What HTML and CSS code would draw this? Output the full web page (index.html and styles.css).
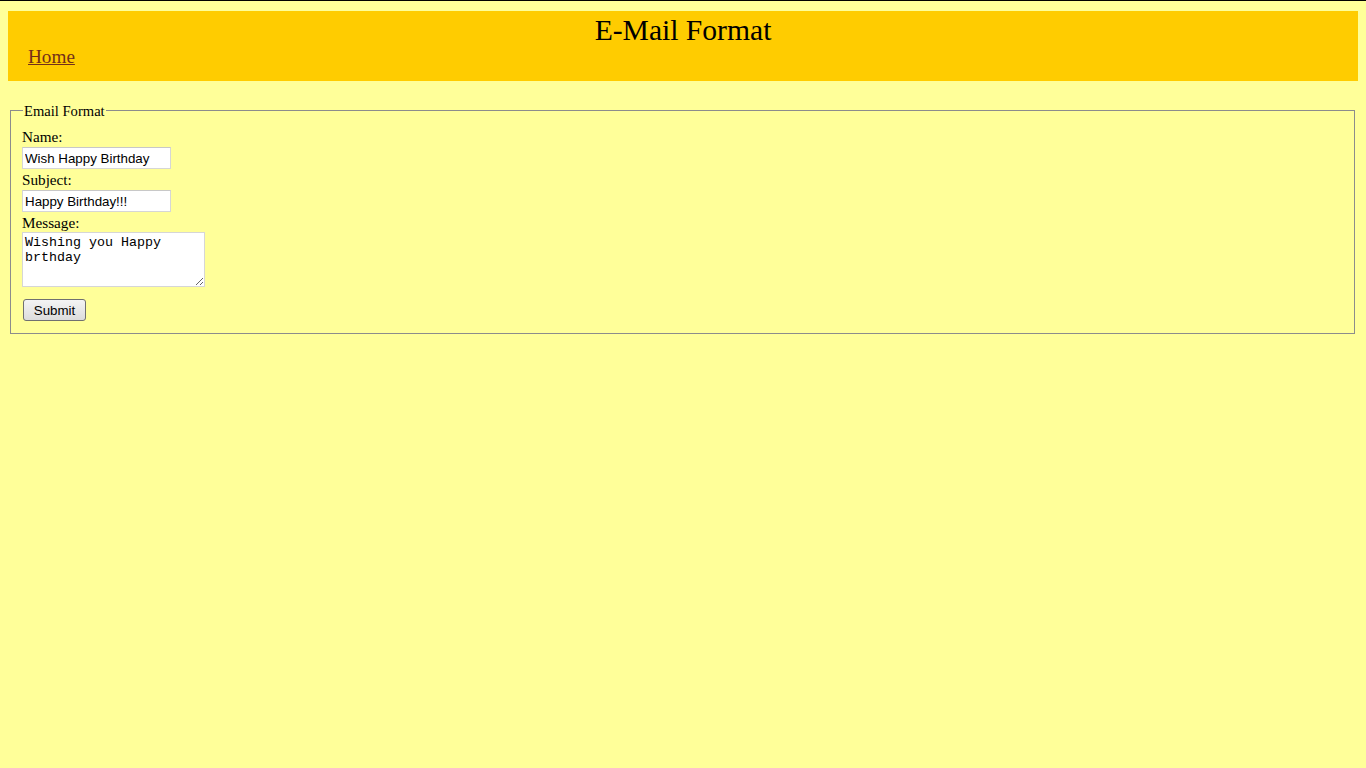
FILE: index.html
```html
<!DOCTYPE html>
<html lang="en">
<head>
<meta charset="utf-8">
<title>E-Mail Format</title>
<link rel="stylesheet" href="styles.css">
</head>
<body>
<header class="banner">
  <h1 class="banner-title">E-Mail Format</h1>
  <a class="banner-link" href="#">Home</a>
</header>
<form class="mail-form">
  <fieldset class="mail-fieldset">
    <legend class="mail-legend">Email Format</legend>
    <label class="field-label" for="name">Name:</label>
    <input class="field-input" id="name" type="text" value="Wish Happy Birthday">
    <label class="field-label" for="subject">Subject:</label>
    <input class="field-input" id="subject" type="text" value="Happy Birthday!!!">
    <label class="field-label" for="message">Message:</label>
    <textarea class="field-area" id="message">Wishing you Happy brthday</textarea>
    <button class="submit-btn" type="button">Submit</button>
  </fieldset>
</form>
</body>
</html>
```
FILE: styles.css
```css
html {
  border-top: 1px solid #000;
  background: #ffff99;
}
body {
  margin: 0;
  padding: 10px 8px 8px;
  background: #ffff99;
  font-family: "Liberation Serif", "Times New Roman", serif;
  font-size: 16px;
  color: #000;
}
.banner {
  background: #ffcc00;
  height: 70px;
  box-sizing: border-box;
  padding: 3px 20px 0;
}
.banner-title {
  margin: 0;
  font-size: 29.6px;
  font-weight: normal;
  line-height: 33px;
  text-align: center;
}
.banner-link {
  display: inline-block;
  font-size: 19.2px;
  line-height: 20px;
  color: #73301a;
  text-decoration: underline;
}
.mail-form {
  margin: 19px 0 0;
}
.mail-fieldset {
  margin: 0 3px 0 2px;
  padding: 8px 11px 12px;
  border: 1px solid #8c8c8c;
  display: flex;
  flex-direction: column;
  align-items: flex-start;
}
.mail-legend {
  padding: 2px 1px 0;
  margin-left: 1px;
  font-size: 14.6px;
  line-height: 18px;
}
.field-label {
  display: block;
  font-size: 15.2px;
  line-height: 18px;
}
.field-input {
  box-sizing: border-box;
  width: 149px;
  height: 22px;
  margin: 1px 0 2px;
  padding: 1px 2px;
  border: 1px solid #d6d6d6;
  border-top-color: #c8c8c8;
  background: #fff;
  font-family: "Liberation Sans", Arial, sans-serif;
  font-size: 13.33px;
  color: #000;
}
.field-area {
  box-sizing: border-box;
  width: 183px;
  height: 55px;
  margin: 0;
  padding: 2px;
  border: 1px solid #d6d6d6;
  background: #fff;
  font-family: "Liberation Mono", "Courier New", monospace;
  font-size: 13.33px;
  line-height: 15px;
  color: #000;
}
.submit-btn {
  margin: 12px 0 0 1px;
  width: 63px;
  height: 22px;
  padding: 0;
  border: 1px solid #707070;
  border-radius: 3px;
  background: linear-gradient(#f4f4f4, #dcdcdc);
  font-family: "Liberation Sans", Arial, sans-serif;
  font-size: 13.33px;
  color: #000;
}
```
